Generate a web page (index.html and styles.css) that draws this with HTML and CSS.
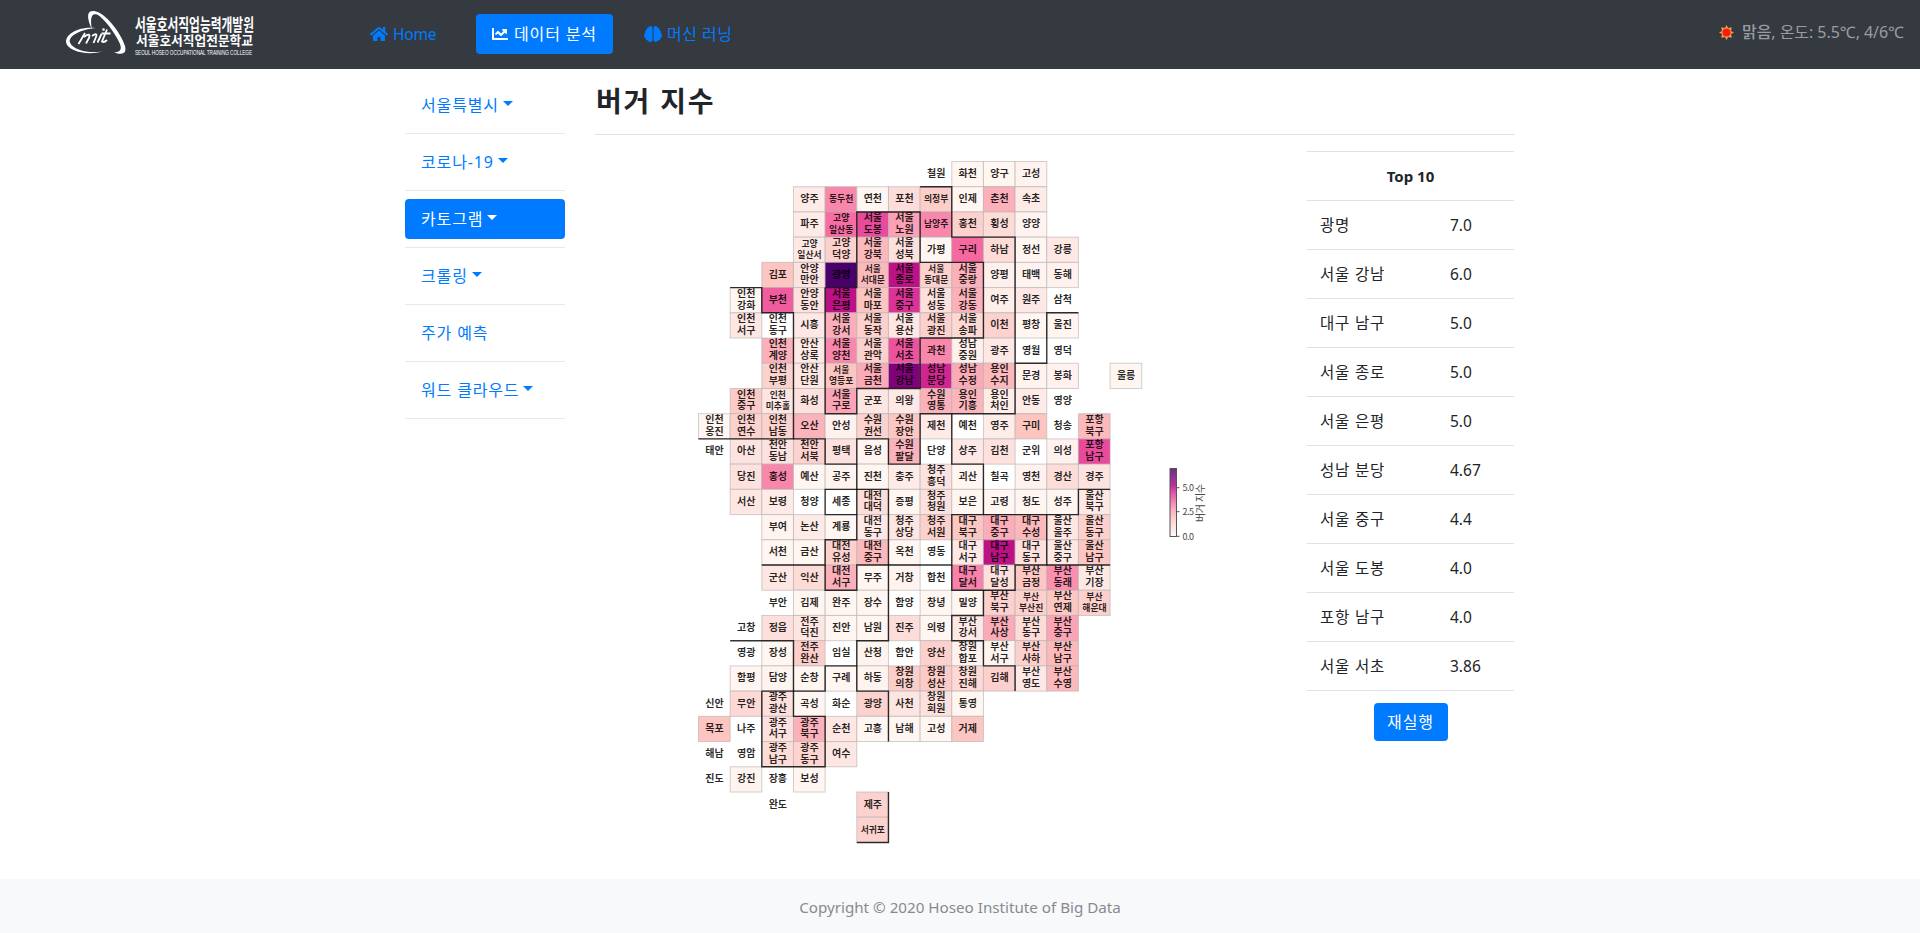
FILE: index.html
```html
<!DOCTYPE html>
<html lang="ko">
<head>
<meta charset="utf-8">
<title>버거 지수</title>
<link rel="stylesheet" href="styles.css">
</head>
<body>
<nav class="navbar">
  <svg class="logo" viewBox="0 0 200 60" width="200" height="60">
    <path d="M26 26C20 12 21 6.500 28 7C39 8 55 29 59 42C61 50 56 51 48 48.500C54 48 56 46 54 40C50 30 38 14 31 10.500C25 8.500 24 15 26 26Z" fill="#fff"/>
    <path d="M30 24C14 25.500 2 32 4 38.500C7 46 22 49.500 36 47.500C21 52 1 47 0 38C0 29 14 22 30 24Z" fill="#fff"/>
    <path d="M12.500 40L19 29M18 33q7-5 5 1l-3 5.500M26 32q6-4 4 1l-2.500 6M35.500 30l-4 8.500M41 25.500l-5 12q2 1.500 5-1.500M35.500 29.500h9" fill="none" stroke="#fff" stroke-width="1.800"/>
    <circle cx="37.500" cy="25.500" r="1.300" fill="#fff"/>
    <text class="logo-main" x="69" y="26.500" font-size="16.500" textLength="119" lengthAdjust="spacingAndGlyphs">서울호서직업능력개발원</text>
    <text class="logo-main" x="70" y="41" font-size="13" textLength="117" lengthAdjust="spacingAndGlyphs">서울호서직업전문학교</text>
    <text class="logo-sub" x="69" y="51.200" font-size="7.500" textLength="117" lengthAdjust="spacingAndGlyphs">SEOUL HOSEO OCCUPATIONAL TRAINING COLLEGE</text>
  </svg>
  <div class="nav-links">
    <a class="nav-link home"><svg class="icon" viewBox="0 0 576 512" width="18" height="16"><path d="M280.37 148.26L96 300.11V464a16 16 0 0 0 16 16l112.06-.29a16 16 0 0 0 15.92-16V368a16 16 0 0 1 16-16h64a16 16 0 0 1 16 16v95.64a16 16 0 0 0 16 16.05L464 480a16 16 0 0 0 16-16V300L295.67 148.26a12.19 12.19 0 0 0-15.3 0zM571.6 251.47L488 182.56V44.05a12 12 0 0 0-12-12h-56a12 12 0 0 0-12 12v72.61L318.47 43a48 48 0 0 0-61 0L4.34 251.47a12 12 0 0 0-1.6 16.9l25.5 31A12 12 0 0 0 45.15 301l235.22-193.74a12.19 12.19 0 0 1 15.3 0L530.9 301a12 12 0 0 0 16.9-1.6l25.5-31a12 12 0 0 0-1.7-16.93z"/></svg><span class="latin">Home</span></a>
    <a class="nav-link active"><svg class="icon" viewBox="0 0 512 512" width="16" height="16"><path d="M496 384H64V80c0-8.84-7.16-16-16-16H16C7.16 64 0 71.16 0 80v336c0 17.67 14.33 32 32 32h464c8.84 0 16-7.16 16-16v-32c0-8.84-7.16-16-16-16zM464 96H345.94c-21.38 0-32.09 25.85-16.97 40.97l32.4 32.4L288 242.75l-73.37-73.37c-12.5-12.5-32.76-12.5-45.25 0l-68.69 68.69c-6.25 6.25-6.25 16.38 0 22.63l22.62 22.62c6.25 6.25 16.38 6.25 22.63 0L192 237.25l73.37 73.37c12.5 12.5 32.76 12.5 45.25 0l96-96 32.4 32.4c15.12 15.12 40.97 4.41 40.97-16.97V112c.01-8.84-7.15-16-15.99-16z"/></svg><span>데이터 분석</span></a>
    <a class="nav-link brain"><svg class="icon" viewBox="0 0 576 512" width="18" height="16"><path d="M208 0c-29.9 0-54.7 20.5-61.8 48.2-.8 0-1.4-.2-2.2-.2-35.3 0-64 28.7-64 64 0 4.8.6 9.5 1.7 14C52.5 138 32 166.6 32 200c0 12.6 3.2 24.3 8.3 34.9C16.3 248.7 0 274.3 0 304c0 33.3 20.4 61.9 49.4 73.9-.9 4.6-1.4 9.3-1.4 14.1 0 39.8 32.2 72 72 72 4.1 0 8.1-.5 12-1.2 9.6 28.5 36.2 49.2 68 49.2 39.8 0 72-32.2 72-72V64c0-35.3-28.7-64-64-64zm368 304c0-29.7-16.3-55.3-40.3-69.1 5.2-10.6 8.3-22.3 8.3-34.9 0-33.4-20.5-62-49.7-74 1-4.5 1.7-9.2 1.7-14 0-35.3-28.7-64-64-64-.8 0-1.5.2-2.2.2C422.7 20.5 397.9 0 368 0c-35.3 0-64 28.6-64 64v376c0 39.8 32.2 72 72 72 31.8 0 58.4-20.7 68-49.2 3.9.7 7.9 1.2 12 1.2 39.8 0 72-32.2 72-72 0-4.8-.5-9.5-1.4-14.1 29-12 49.4-40.6 49.4-73.9z"/></svg><span>머신 러닝</span></a>
  </div>
  <div class="weather">
    <svg viewBox="0 0 16 16" width="15" height="15"><path d="M8 0l1.700 3.200L13.600 2.400 12.800 6.300 16 8l-3.200 1.700.8 3.900-3.900-.8L8 16l-1.700-3.200-3.900.8.8-3.900L0 8l3.200-1.700-.8-3.900 3.900.8z" fill="#f0a04b"/><circle cx="8" cy="8" r="4.300" fill="#fe1a0c"/></svg>
    <span><b>맑음</b>, 온도: 5.5℃, 4/6℃</span>
  </div>
</nav>

<main class="container">
  <ul class="sidebar">
    <li><a class="side-link caret">서울특별시</a></li>
    <li><a class="side-link caret">코로나-19</a></li>
    <li><a class="side-link caret active">카토그램</a></li>
    <li><a class="side-link caret">크롤링</a></li>
    <li><a class="side-link">주가 예측</a></li>
    <li><a class="side-link caret">워드 클라우드</a></li>
  </ul>
  <section class="content">
    <h3 class="title">버거 지수</h3>
    <div class="panels">
      <svg class="cartogram" id="map" viewBox="595 151 712 712" width="712" height="712"></svg>
      <div class="ranking">
        <table class="table">
          <thead><tr><th class="name"></th><th></th></tr><tr><th colspan="2">Top 10</th></tr></thead>
          <tbody>
            <tr><td>광명</td><td>7.0</td></tr>
            <tr><td>서울 강남</td><td>6.0</td></tr>
            <tr><td>대구 남구</td><td>5.0</td></tr>
            <tr><td>서울 종로</td><td>5.0</td></tr>
            <tr><td>서울 은평</td><td>5.0</td></tr>
            <tr><td>성남 분당</td><td>4.67</td></tr>
            <tr><td>서울 중구</td><td>4.4</td></tr>
            <tr><td>서울 도봉</td><td>4.0</td></tr>
            <tr><td>포항 남구</td><td>4.0</td></tr>
            <tr><td>서울 서초</td><td>3.86</td></tr>
          </tbody>
        </table>
        <button class="btn">재실행</button>
      </div>
    </div>
  </section>
</main>
<footer class="footer">Copyright © 2020 Hoseo Institute of Big Data</footer>
<script src="map.js"></script>
</body>
</html>
```

FILE: styles.css
```css
* { box-sizing: border-box; }
body {
  margin: 0;
  height: 933px;
  display: flex;
  flex-direction: column;
  overflow: hidden;
  background: #fff;
  color: #212529;
  font: 16px/24px "Noto Sans", "Noto Sans CJK KR", sans-serif;
}
.navbar {
  height: 69px;
  flex: none;
  display: flex;
  align-items: flex-start;
  background: #343a40;
  padding: 0 16px 0 66px;
}
.logo { margin-top: 4px; overflow: visible; }
.logo text { fill: #fff; }
.logo-main { font-family: "Noto Sans CJK KR", sans-serif; font-weight: 700; }
.logo-sub { font-family: "Liberation Sans", sans-serif; font-weight: 400; }
.nav-links { display: flex; gap: 8px; margin: 14px 0 0 88px; }
.nav-link {
  display: flex;
  align-items: center;
  gap: 6px;
  height: 40px;
  padding: 0 16px;
  color: #007bff;
  border-radius: 4px;
  letter-spacing: .85px;
  white-space: nowrap;
}
.nav-link .icon { fill: currentColor; flex: none; }
.nav-link.home { width: 114px; gap: 5px; }
.nav-link.home .latin { font-size: 15.5px; letter-spacing: -.2px; }
.nav-link.active { width: 137px; background: #007bff; color: #fff; }
.nav-link.brain { margin-left: 7px; gap: 5px; letter-spacing: .5px; }
.weather {
  margin-left: auto;
  display: flex;
  align-items: center;
  gap: 8px;
  height: 24px;
  margin-top: 20px;
  color: #9a9da0;
  font-size: 16px;
  letter-spacing: -.05px;
  white-space: nowrap;
}
.weather b { font-weight: 500; }
.container { display: flex; width: 1110px; margin: 0 auto; flex: 1; }
.sidebar { list-style: none; margin: 8px 0 0; padding: 0; width: 160px; flex: none; }
.sidebar li { height: 57px; padding: 8px 0; border-bottom: 1px solid #e9e9ea; }
.side-link {
  display: flex;
  align-items: center;
  height: 40px;
  padding: 0 16px;
  color: #007bff;
  border-radius: 4px;
  letter-spacing: .85px;
  white-space: nowrap;
}
.side-link.active { background: #007bff; color: #fff; }
.caret::after {
  content: "";
  margin-left: 4px;
  margin-top: -3px;
  border: 5px solid transparent;
  border-top-color: currentColor;
  border-bottom: 0;
}
.content { width: 920px; margin-left: 30px; }
.title {
  height: 66px;
  margin: 0 0 16px;
  padding: 15px 0 0 1px;
  border-bottom: 1px solid #e2e2e3;
  font-size: 28px;
  line-height: 34px;
  font-weight: 600;
  letter-spacing: 1.8px;
}
.panels { display: flex; }
.cartogram { flex: none; font-family: "Noto Sans CJK KR", sans-serif; }
.cell { stroke: #b4b0b0; stroke-opacity: .6; stroke-width: 1; }
.border { fill: none; stroke: #000; stroke-opacity: .8; stroke-width: 1.400; }
.place { font-weight: 700; text-anchor: middle; fill: #000; fill-opacity: .85; }
.scale { fill: #4a4a4a; font-size: 9px; }
.scale-title { fill: #4a4a4a; font-size: 10px; }
.tick { stroke: #555; stroke-width: 1; fill: none; }
.ranking { width: 207px; flex: none; display: flex; flex-direction: column; align-items: center; }
.table { width: 207px; table-layout: fixed; border-spacing: 0; border-bottom: 1px solid #dee2e6; }
.table th, .table td {
  height: 49px;
  padding: 0 13px;
  border-top: 1px solid #dee2e6;
  text-align: left;
  font-size: 15.5px;
}
.table th { text-align: center; font-weight: 700; font-size: 15px; }
.table tr:first-child th { height: 0; padding: 0; border: 0; line-height: 0; }
.table th.name { width: 130px; }
.table td:first-child { letter-spacing: .8px; }
.btn {
  width: 74px;
  height: 38px;
  margin-top: 12px;
  padding: 0;
  border: 0;
  border-radius: 4px;
  background: #007bff;
  color: #fff;
  font: 16px/24px "Noto Sans", "Noto Sans CJK KR", sans-serif;
  letter-spacing: .9px;
}
.footer {
  height: 54px;
  flex: none;
  background: #f8f9fa;
  color: #868b90;
  text-align: center;
  line-height: 56px;
  font-size: 15.2px;
}
```

FILE: map.js
```js
// Each row: first column, then "name:intensity" (percent of the scale; no number = no data).
// "_" skips a column.
const rows = [
  [7, "철원 화천:1 양구:1 고성:2"],
  [3, "양주:7 동두천:43 연천:1 포천:14 의정부:21 인제:1 춘천:32 속초:7"],
  [3, "파주:7 고양/일산동:49 서울/도봉:57 서울/노원:37 남양주:43 홍천:20 횡성:15 양양:2"],
  [3, "고양/일산서:8 고양/덕양:20 서울/강북:29 서울/성북:13 가평:1 구리:50 하남:15 정선:1 강릉:8"],
  [2, "김포:25 안양/만안:11 광명:100 서울/서대문:29 서울/종로:71 서울/동대문:20 서울/중랑:32 양평:4 태백:2 동해:3"],
  [1, "인천/강화:1 부천:53 안양/동안:12 서울/은평:71 서울/마포:25 서울/중구:63 서울/성동:13 서울/강동:32 여주:5 원주:8 삼척"],
  [1, "인천/서구:9 인천/동구 시흥:8 서울/강서:33 서울/동작:20 서울/용산:9 서울/광진:20 서울/송파:16 이천:19 평창:1 울진:1"],
  [2, "인천/계양:32 안산/상록:8 서울/양천:43 서울/관악:20 서울/서초:55 과천:43 성남/중원:4 광주:8 영월 영덕"],
  [2, "인천/부평:19 안산/단원:9 서울/영등포:25 서울/금천:34 서울/강남:86 성남/분당:66 성남/수정:34 용인/수지:29 문경:2 봉화:3 _ 울릉:1"],
  [1, "인천/중구:22 인천/미추홀:10 화성:12 서울/구로:36 군포:10 의왕:8 수원/영통:32 용인/기흥:30 용인/처인:6 안동:7 영양"],
  [0, "인천/옹진:1 인천/연수:19 인천/남동:19 오산:31 안성:3 수원/권선:19 수원/장안:24 제천:7 예천 영주:6 구미:25 청송 포항/북구:29"],
  [0, "태안 아산:11 천안/동남:12 천안/서북:19 평택:12 음성:2 수원/팔달:31 단양 상주:8 김천:12 군위 의성:3 포항/남구:57"],
  [1, "당진:12 홍성:43 예산:1 공주:2 진천:1 충주:7 청주/흥덕:11 괴산:1 칠곡 영천:3 경산:14 경주:11"],
  [1, "서산:9 보령:7 청양 세종 대전/대덕:14 증평:1 청주/청원:12 보은:1 고령:1 청도:1 성주:1 울산/북구:8"],
  [2, "부여:2 논산:7 계룡:1 대전/동구:8 청주/상당:10 청주/서원:20 대구/북구:24 대구/중구:33 대구/수성:29 울산/울주:9 울산/동구:20"],
  [2, "서천:1 금산:1 대전/유성:20 대전/중구:29 옥천:1 영동 대구/서구:8 대구/남구:71 대구/동구:13 울산/중구:8 울산/남구:24"],
  [2, "군산:9 익산:15 대전/서구:32 무주:1 거창:2 합천 대구/달서:44 대구/달성:13 부산/금정:24 부산/동래:41 부산/기장:8"],
  [2, "부안 김제:1 완주:1 장수:1 함양 창녕:1 밀양:1 부산/북구:20 부산/부산진:20 부산/연제:24 부산/해운대:20"],
  [1, "고창 정읍:13 전주/덕진:10 진안:1 남원:1 진주:14 의령:1 부산/강서:8 부산/사상:34 부산/동구:15 부산/중구:36"],
  [1, "영광 장성:1 전주/완산:21 임실 산청:2 함안 양산:20 창원/합포:3 부산/서구:2 부산/사하:20 부산/남구:29"],
  [1, "함평:1 담양:2 순창:1 구례:1 하동:2 창원/의창:21 창원/성산:22 창원/진해:16 김해:20 부산/영도:8 부산/수영:29"],
  [0, "신안 무안:16 광주/광산:13 곡성:1 화순 광양:19 사천:10 창원/회원:12 통영:1"],
  [0, "목포:25 나주 광주/서구:12 광주/북구:32 순천:9 고흥:1 남해:1 고성:1 거제:24"],
  [0, "해남 영암 광주/남구:15 광주/동구:18 여수:9"],
  [0, "진도 강진:2 장흥 보성:1"],
  [2, "완도 _ _ 제주:19"],
  [5, "서귀포:19"]
];

// Province outlines as [row, column] grid corners.
const outlines = [
  [[5,1],[5,2],[6,2],[6,3],[11,3],[11,0]],
  [[5,4],[5,5],[2,5],[2,7],[4,7],[4,9],[7,9],[7,7],[9,7],[9,5],[10,5],[10,4],[5,4]],
  [[1,7],[1,8],[3,8],[3,10],[10,10],[10,7],[12,7],[12,6],[11,6],[11,5],[12,5],[12,4],[11,4],[11,3]],
  [[8,10],[8,11],[6,11],[6,12]],
  [[12,5],[13,5],[13,4],[14,4],[14,5],[15,5],[15,4],[16,4],[16,2]],
  [[16,4],[17,4],[17,5],[16,5],[16,6],[19,6],[19,5],[20,5],[20,4],[21,4],[21,3],[19,3],[19,1]],
  [[13,5],[13,6],[16,6]],
  [[13,5],[14,5]],
  [[21,2],[21,3],[22,3],[22,4],[24,4],[24,2],[21,2]],
  [[20,5],[21,5],[21,6],[23,6]],
  [[10,8],[12,8],[12,9],[14,9],[14,8],[16,8],[16,6]],
  [[14,9],[14,12],[13,12],[13,13]],
  [[16,8],[17,8],[17,10],[16,10],[16,11],[14,11]],
  [[17,9],[18,9],[18,8],[19,8],[19,9],[20,9],[20,10],[21,10]],
  [[16,11],[16,13]],
  [[27,5],[27,6],[25,6]]
];

const palette = ["fff7f3", "fde0dd", "fcc5c0", "fa9fb5", "f768a1", "dd3497", "ae017e", "7a0177", "49006a"]
  .map(h => [0, 2, 4].map(i => parseInt(h.substr(i, 2), 16)));

function color(percent) {
  const t = percent / 100 * 8;
  const i = Math.min(7, Math.floor(t));
  return "rgb(" + palette[i].map((v, k) => Math.round(v + (palette[i + 1][k] - v) * (t - i))).join(",") + ")";
}

const X0 = 698.5, Y0 = 161.5, W = 31.66, H = 25.22;
const map = document.getElementById("map");

function add(tag, attrs, text) {
  const el = document.createElementNS("http://www.w3.org/2000/svg", tag);
  for (const k in attrs) el.setAttribute(k, attrs[k]);
  if (text) el.textContent = text;
  map.appendChild(el);
  return el;
}

const labels = [];
rows.forEach(([start, line], r) => {
  line.split(" ").forEach((item, i) => {
    if (item === "_") return;
    const [name, value] = item.split(":");
    const x = X0 + (start + i) * W, y = Y0 + r * H;
    if (value) add("rect", { class: "cell", x, y, width: W, height: H, fill: color(+value) });
    labels.push([name.split("/"), x + W / 2 + .2, y]);
  });
});

outlines.forEach(points => {
  add("polyline", { class: "border", points: points.map(([r, c]) => (X0 + c * W) + "," + (Y0 + r * H)).join(" ") });
});

labels.forEach(([parts, x, y]) => {
  const size = parts[parts.length - 1].length > 2 ? 8.8 : 10;
  const offsets = parts.length === 1 ? [15.5] : [size < 10 ? 9.4 : 9.2, 21];
  parts.forEach((part, i) => add("text", { class: "place", x, y: y + offsets[i], "font-size": size }, part));
});

// Colour scale
for (let i = 0; i < 68; i++) {
  add("rect", { x: 1170, y: 468.5 + i, width: 6.5, height: 1.1, fill: color(100 - i / 67 * 100) });
}
add("rect", { class: "tick", x: 1170, y: 468.5, width: 6.5, height: 68 });
[["5.0", 487.7], ["2.5", 511.7], ["0.0", 536.3]].forEach(([label, y]) => {
  add("path", { class: "tick", d: "M1176.500 " + y + "h3" });
  add("text", { class: "scale", x: 1182.5, y: y + 3.2, textLength: 11.5 }, label);
});
add("text", { class: "scale-title", transform: "translate(1204 522) rotate(-90)", textLength: 38 }, "버거 지수");
```
